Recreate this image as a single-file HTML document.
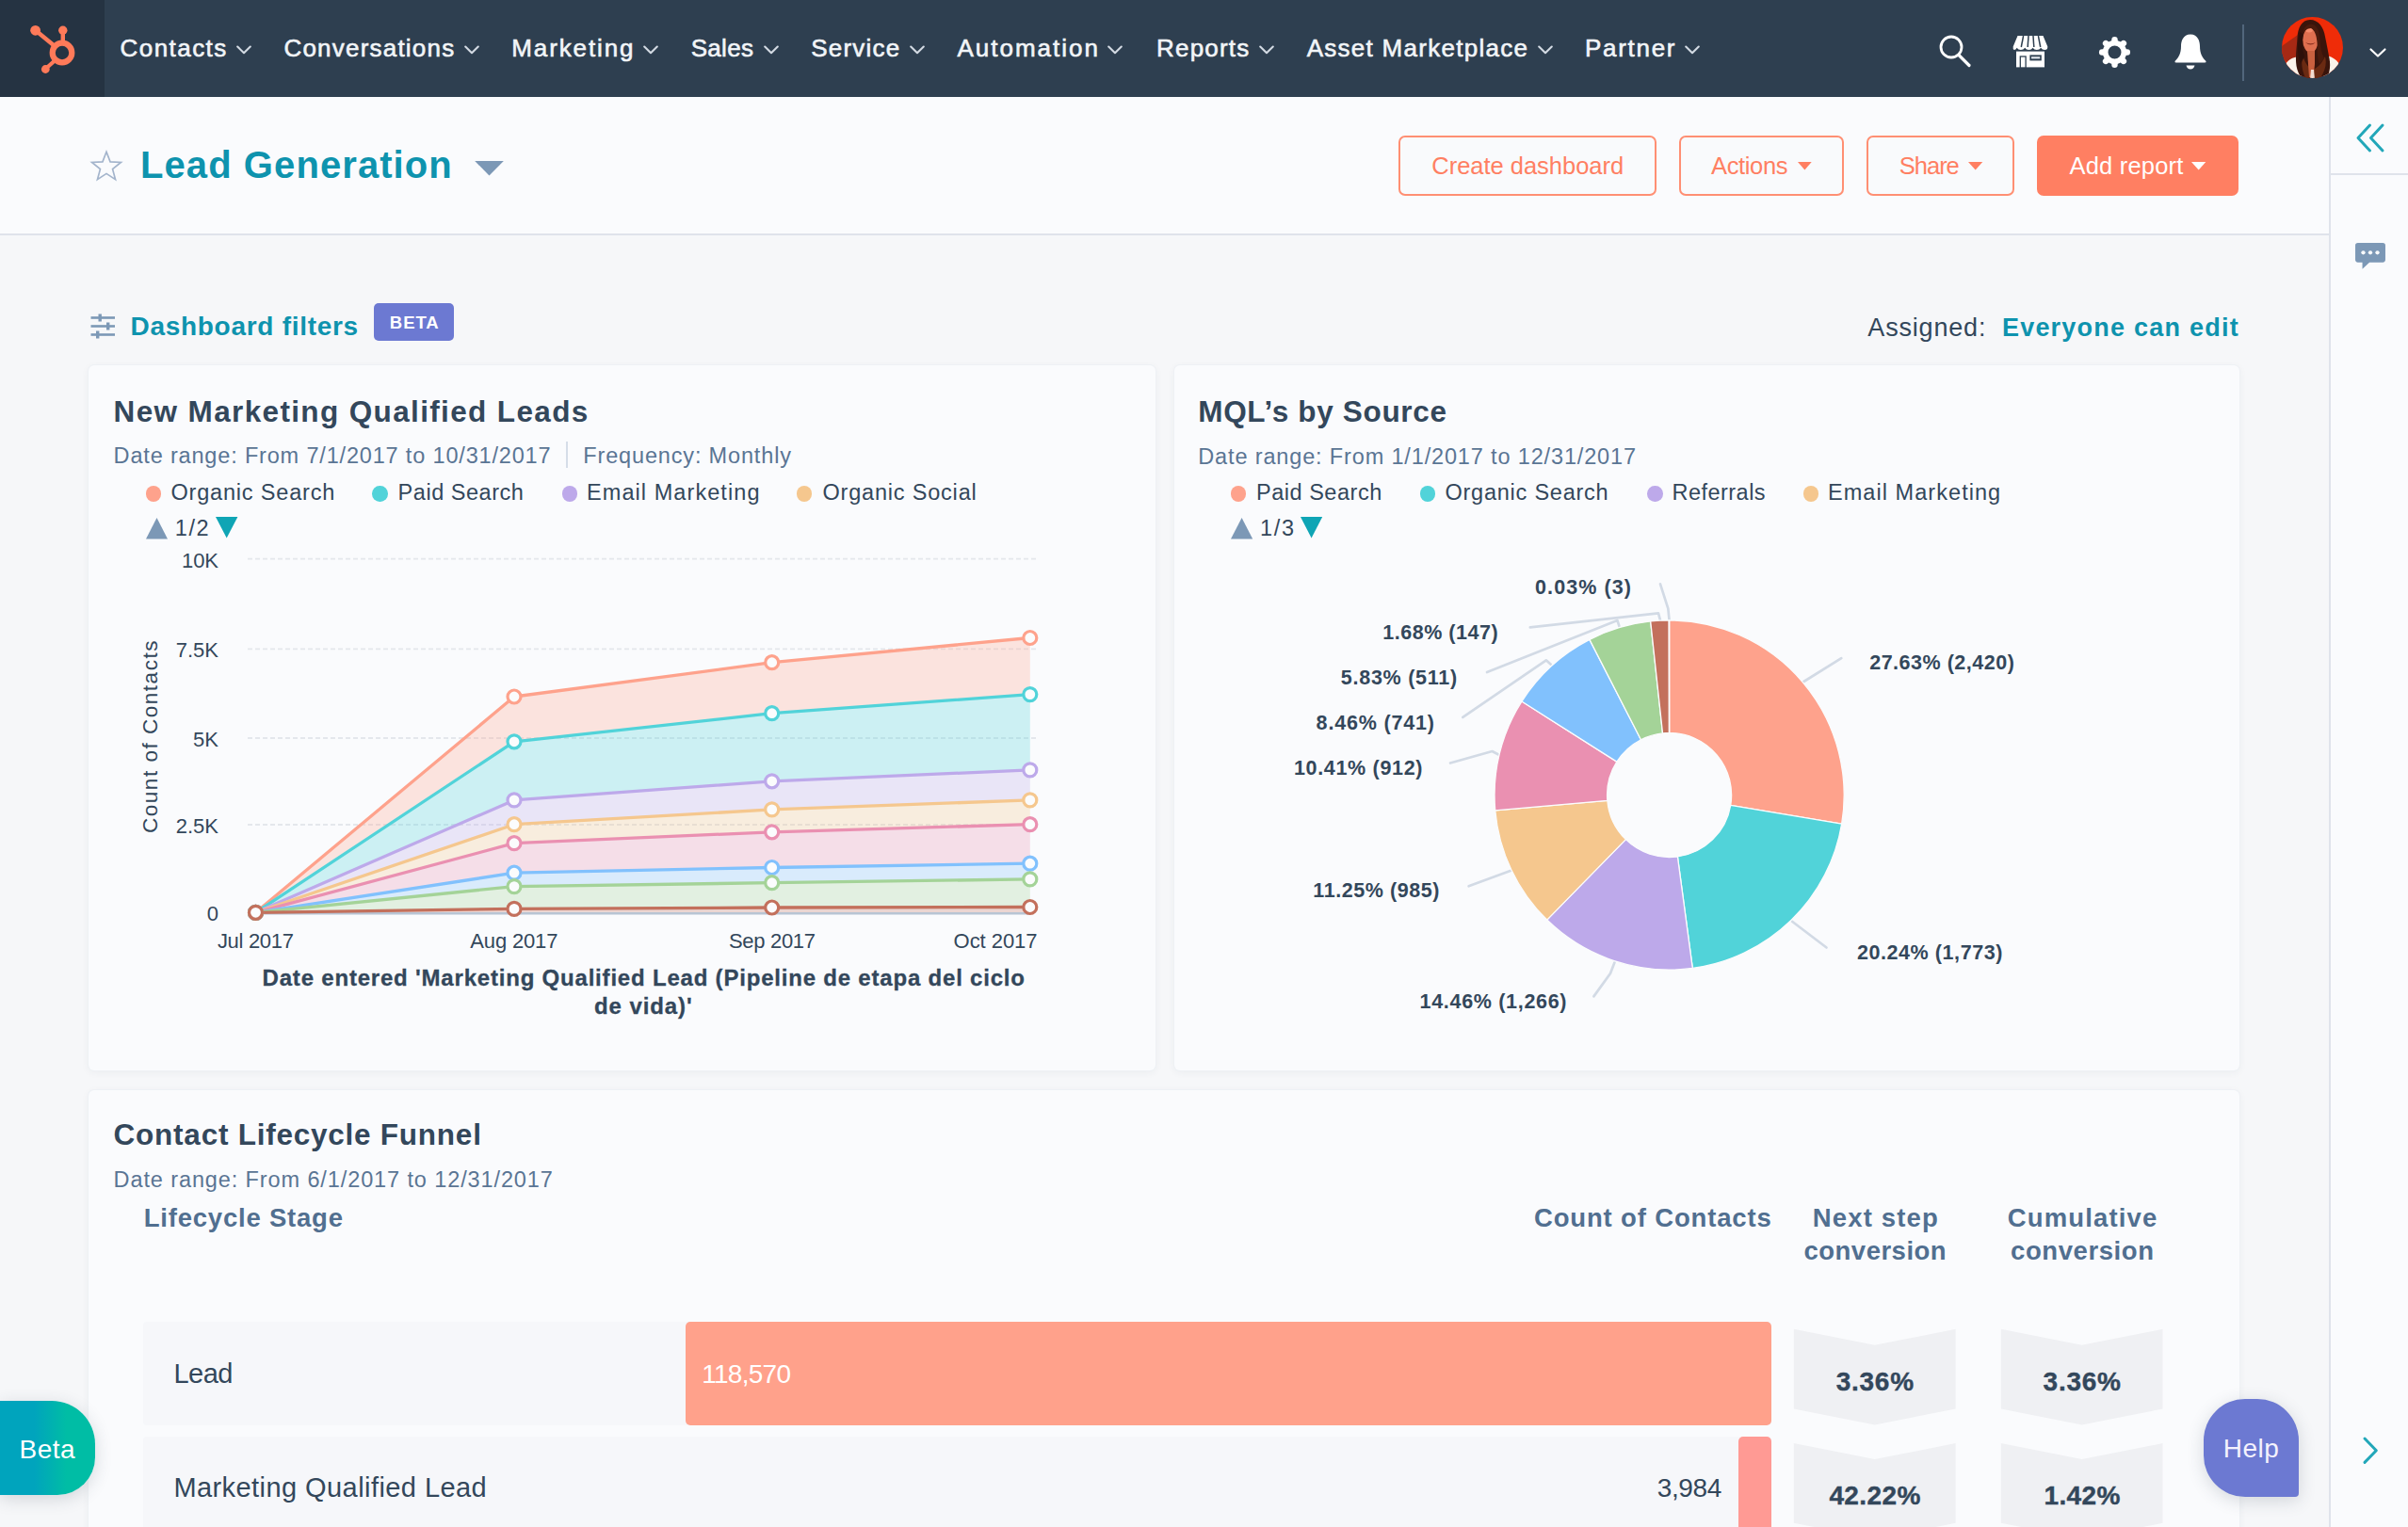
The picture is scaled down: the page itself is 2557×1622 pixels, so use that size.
<!DOCTYPE html><html lang="en"><head><meta charset="utf-8"><title>Lead Generation</title><style>
*{box-sizing:border-box;margin:0;padding:0}
html,body{width:2557px;height:1622px;overflow:hidden;background:#f6f7f9;font-family:"Liberation Sans",sans-serif;}
.t{position:absolute;white-space:nowrap;line-height:1;}
.abs{position:absolute}
#nav{position:absolute;left:0;top:0;width:2557px;height:103.5px;background:#2e3f50;}
#logo{position:absolute;left:0;top:0;width:111px;height:103.5px;background:#253342;}
#header{position:absolute;left:0;top:103px;width:2474px;height:147px;background:#fafbfd;border-bottom:2px solid #dfe3eb;}
#side{position:absolute;left:2473px;top:103px;width:84px;height:1519px;background:#fafbfd;border-left:2px solid #dfe3eb;}
.btn{position:absolute;top:144px;height:64px;border:2px solid #ff8f73;border-radius:7px;background:#f9fafc;}
.card{position:absolute;background:#fafbfd;border-radius:6px;box-shadow:0 0 0 1px #eef1f5,0 2px 8px rgba(45,62,80,.06);}
svg{position:absolute;overflow:visible}
</style></head><body>
<div id="nav"><div id="logo"></div>
<svg style="left:28px;top:22px" width="56" height="60" viewBox="0 0 56 60">
<g fill="none" stroke="#ff7a59" stroke-linecap="round">
<circle cx="38" cy="34" r="10.300" stroke-width="6.2"/>
<line x1="10" y1="10.500" x2="29.500" y2="26.500" stroke-width="4.4"/>
<line x1="38.8" y1="11" x2="38.8" y2="23" stroke-width="4.4"/>
<line x1="20.5" y1="51" x2="30" y2="42.500" stroke-width="4.2"/>
</g>
<g fill="#ff7a59"><circle cx="9.600" cy="10.300" r="5.400"/><circle cx="38.8" cy="10.300" r="4.700"/><circle cx="20.300" cy="51.500" r="4.400"/></g>
</svg>
<div class="t" style="left:127.6px;top:38px;font-size:26.0px;color:#f2f5f8;letter-spacing:1.44px;-webkit-text-stroke:0.60px #f2f5f8;">Contacts</div>
<svg style="left:249.8px;top:47px" width="18" height="12" viewBox="0 0 18 12"><path d="M2.2 2.6 L9 9.2 L15.8 2.6" fill="none" stroke="#d3dae3" stroke-width="2.1" stroke-linecap="round" stroke-linejoin="round"/></svg>
<div class="t" style="left:301.4px;top:38px;font-size:26.0px;color:#f2f5f8;letter-spacing:1.22px;-webkit-text-stroke:0.60px #f2f5f8;">Conversations</div>
<svg style="left:491.7px;top:47px" width="18" height="12" viewBox="0 0 18 12"><path d="M2.2 2.6 L9 9.2 L15.8 2.6" fill="none" stroke="#d3dae3" stroke-width="2.1" stroke-linecap="round" stroke-linejoin="round"/></svg>
<div class="t" style="left:543.3px;top:38px;font-size:26.0px;color:#f2f5f8;letter-spacing:1.88px;-webkit-text-stroke:0.60px #f2f5f8;">Marketing</div>
<svg style="left:682.0px;top:47px" width="18" height="12" viewBox="0 0 18 12"><path d="M2.2 2.6 L9 9.2 L15.8 2.6" fill="none" stroke="#d3dae3" stroke-width="2.1" stroke-linecap="round" stroke-linejoin="round"/></svg>
<div class="t" style="left:733.7px;top:38px;font-size:26.0px;color:#f2f5f8;letter-spacing:0.31px;-webkit-text-stroke:0.60px #f2f5f8;">Sales</div>
<svg style="left:809.5px;top:47px" width="18" height="12" viewBox="0 0 18 12"><path d="M2.2 2.6 L9 9.2 L15.8 2.6" fill="none" stroke="#d3dae3" stroke-width="2.1" stroke-linecap="round" stroke-linejoin="round"/></svg>
<div class="t" style="left:861.2px;top:38px;font-size:26.0px;color:#f2f5f8;letter-spacing:1.23px;-webkit-text-stroke:0.60px #f2f5f8;">Service</div>
<svg style="left:964.8px;top:47px" width="18" height="12" viewBox="0 0 18 12"><path d="M2.2 2.6 L9 9.2 L15.8 2.6" fill="none" stroke="#d3dae3" stroke-width="2.1" stroke-linecap="round" stroke-linejoin="round"/></svg>
<div class="t" style="left:1016.5px;top:38px;font-size:26.0px;color:#f2f5f8;letter-spacing:1.99px;-webkit-text-stroke:0.60px #f2f5f8;">Automation</div>
<svg style="left:1175.4px;top:47px" width="18" height="12" viewBox="0 0 18 12"><path d="M2.2 2.6 L9 9.2 L15.8 2.6" fill="none" stroke="#d3dae3" stroke-width="2.1" stroke-linecap="round" stroke-linejoin="round"/></svg>
<div class="t" style="left:1228.0px;top:38px;font-size:26.0px;color:#f2f5f8;letter-spacing:1.21px;-webkit-text-stroke:0.60px #f2f5f8;">Reports</div>
<svg style="left:1335.8px;top:47px" width="18" height="12" viewBox="0 0 18 12"><path d="M2.2 2.6 L9 9.2 L15.8 2.6" fill="none" stroke="#d3dae3" stroke-width="2.1" stroke-linecap="round" stroke-linejoin="round"/></svg>
<div class="t" style="left:1387.7px;top:38px;font-size:26.0px;color:#f2f5f8;letter-spacing:1.28px;-webkit-text-stroke:0.60px #f2f5f8;">Asset Marketplace</div>
<svg style="left:1631.5px;top:47px" width="18" height="12" viewBox="0 0 18 12"><path d="M2.2 2.6 L9 9.2 L15.8 2.6" fill="none" stroke="#d3dae3" stroke-width="2.1" stroke-linecap="round" stroke-linejoin="round"/></svg>
<div class="t" style="left:1683.0px;top:38px;font-size:26.0px;color:#f2f5f8;letter-spacing:1.71px;-webkit-text-stroke:0.60px #f2f5f8;">Partner</div>
<svg style="left:1788.0px;top:47px" width="18" height="12" viewBox="0 0 18 12"><path d="M2.2 2.6 L9 9.2 L15.8 2.6" fill="none" stroke="#d3dae3" stroke-width="2.1" stroke-linecap="round" stroke-linejoin="round"/></svg>
<svg style="left:2058px;top:36px" width="36" height="36" viewBox="0 0 36 36"><circle cx="14" cy="14" r="11" fill="none" stroke="#fff" stroke-width="2.8"/><line x1="22" y1="22.5" x2="33" y2="33.5" stroke="#fff" stroke-width="3.2" stroke-linecap="round"/></svg>
<svg style="left:2136px;top:36px" width="40" height="38" viewBox="0 0 40 38"><g fill="#fff">
<path d="M6.5 2 H33.5 L38.3 13.5 Q38.5 17 35.2 17 Q32.500 17 31.2 14.8 Q29.800 17 26.7 17 Q24 17 22.6 14.8 Q21.200 17 18.5 17 Q15.500 17 14.2 14.8 Q12.800 17 9.8 17 Q7 17 5.7 14.8 Q4.500 17 2.8 17 Q1.200 16.500 1.7 13.5 Z"/>
<rect x="5" y="18.6" width="30" height="16.8"/></g>
<g stroke="#2e3f50" stroke-width="1.5" fill="none"><line x1="12.6" y1="2" x2="10.3" y2="14"/><line x1="18" y1="2" x2="17.200" y2="14"/><line x1="23" y1="2" x2="23.800" y2="14"/><line x1="28.4" y1="2" x2="30.700" y2="14"/>
<rect x="9.3" y="24" width="5.8" height="12.5" stroke-width="1.300"/></g>
<rect x="19.4" y="22.4" width="12.4" height="6" fill="#2e3f50"/><rect x="21" y="24.200" width="9.200" height="2.200" fill="#dfe5ec"/></svg>
<svg style="left:2228px;top:37.5px" width="35" height="35" viewBox="0 0 36 36"><g stroke="#fff" fill="none"><circle cx="18" cy="18" r="10.1" stroke-width="5.8"/><line x1="18.00" y1="6.50" x2="18.00" y2="4.30" stroke-width="6.6" stroke-linecap="round"/><line x1="26.13" y1="9.87" x2="27.69" y2="8.31" stroke-width="6.6" stroke-linecap="round"/><line x1="29.50" y1="18.00" x2="31.70" y2="18.00" stroke-width="6.6" stroke-linecap="round"/><line x1="26.13" y1="26.13" x2="27.69" y2="27.69" stroke-width="6.6" stroke-linecap="round"/><line x1="18.00" y1="29.50" x2="18.00" y2="31.70" stroke-width="6.6" stroke-linecap="round"/><line x1="9.87" y1="26.13" x2="8.31" y2="27.69" stroke-width="6.6" stroke-linecap="round"/><line x1="6.50" y1="18.00" x2="4.30" y2="18.00" stroke-width="6.6" stroke-linecap="round"/><line x1="9.87" y1="9.87" x2="8.31" y2="8.31" stroke-width="6.6" stroke-linecap="round"/></g></svg>
<svg style="left:2308px;top:35px" width="36" height="40" viewBox="0 0 36 40"><path fill="#fff" d="M18 1.5 C10 1.500 8 9 8 14 C8 22 5.500 26 1.5 30 Q1 31.500 3 31.5 H33 Q35 31.500 34.5 30 C30.500 26 28 22 28 14 C28 9 26 1.500 18 1.5 Z M13.5 34.5 H22.5 Q21.500 38.500 18 38.5 Q14.500 38.500 13.5 34.5 Z"/></svg>
<div class="abs" style="left:2381px;top:26px;width:2px;height:60px;background:#52667c"></div>
<div class="abs" style="left:2422.5px;top:17.5px;width:65px;height:65px;border-radius:50%;overflow:hidden"><svg style="left:0;top:0" width="65" height="65" viewBox="0 0 65 65">
<g><rect width="65" height="65" fill="#ef2c08"/>
<path d="M0 31 L17 19 L17 43 L6 48 L0 44 Z" fill="#a62914"/>
<path d="M4 50 C8 44 14 42 18 43 L22 66 L4 66 Z" fill="#fbf3ea"/>
<path d="M45 41 C52 41 58 45 61 50 L58 66 L44 66 Z" fill="#fbf3ea"/>
<path d="M30 3 C21 3 17 12 16.5 22 C16 32 14 42 15.5 52 C16.500 58 19 63 22 66 L47 66 C51 60 52 52 50.5 44 C49 36 47.500 28 46 21 C44.500 11 39 3 30 3 Z" fill="#3a140b"/>
<path d="M22 40 C20 50 22 60 26 66 L40 66 C46 58 48 50 46 42 C42 50 38 54 33 56 C28 54 24 48 22 40 Z" fill="#6a2a12"/>
<ellipse cx="30.5" cy="24.5" rx="8.2" ry="13.500" fill="#df6f4f"/>
<ellipse cx="29" cy="13.500" rx="4" ry="3" fill="#f58a6a"/>
<path d="M27 36 L35 36 L35 50 L33.500 64 L29 64 L28 50 Z" fill="#c9603f"/>
<path d="M25 27 Q30.500 32 36 27 Q30.500 29.500 25 27 Z" fill="#8a3020"/>
<path d="M22.5 18 C23 10 28 6.500 33 8 C38 9.500 40 16 40.5 24 C41 32 42 38 45 44 L40 50 C37 42 38 34 37.500 27 C37 20 35 14 31 12 C27 12 24 15 22.500 18 Z" fill="#4a1a0c"/>
<path d="M22.5 18 C21 26 21.500 34 24 42 L20 50 C16 40 16.500 26 19 16 Z" fill="#2e100a"/>
<path d="M31 56 L34 56 L35 66 L30 66 Z" fill="#f3dcd0"/>
</g></svg></div>
<svg style="left:2515px;top:50px" width="20" height="12" viewBox="0 0 20 12"><path d="M2.5 2.5 L10 9.5 L17.5 2.5" fill="none" stroke="#fff" stroke-width="2.2" stroke-linecap="round" stroke-linejoin="round"/></svg>
</div>
<div id="header"></div>
<svg style="left:94px;top:157px" width="38" height="38" viewBox="0 0 38 38"><polygon points="19.00,4.30 23.06,14.92 34.41,15.49 25.56,22.63 28.52,33.61 19.00,27.40 9.48,33.61 12.44,22.63 3.59,15.49 14.94,14.92" fill="none" stroke="#a3b4cc" stroke-width="1.7" stroke-linejoin="miter"/></svg>
<div class="t" style="left:149.0px;top:155px;font-size:40.0px;color:#0e93ae;font-weight:700;letter-spacing:1.08px;">Lead Generation</div>
<svg style="left:503px;top:170px" width="33" height="18" viewBox="0 0 33 18"><path d="M1.2 1 H31.8 L16.5 16.6 Z" fill="#7c98b6"/></svg>
<div class="btn" style="left:1485.4px;width:273.6px;"></div>
<div class="t" style="left:1520.3px;top:164px;font-size:25.5px;color:#ff7f62;letter-spacing:-0.02px;">Create dashboard</div>
<div class="btn" style="left:1782.9px;width:175.4px;"></div>
<div class="t" style="left:1817.0px;top:164px;font-size:25.5px;color:#ff7f62;letter-spacing:-0.35px;">Actions</div>
<svg style="left:1908.5px;top:171.6px" width="14.7" height="8.6" viewBox="0 0 14.7 8.6"><path d="M0 0 H14.7 L7.4 8.6 Z" fill="#ff7f62"/></svg>
<div class="btn" style="left:1981.9px;width:157.0px;"></div>
<div class="t" style="left:2016.8px;top:164px;font-size:25.5px;color:#ff7f62;letter-spacing:-1.01px;">Share</div>
<svg style="left:2089.5px;top:171.6px" width="15.3" height="8.6" viewBox="0 0 15.3 8.6"><path d="M0 0 H15.3 L7.7 8.6 Z" fill="#ff7f62"/></svg>
<div class="btn" style="left:2162.8px;width:214.3px;background:#ff7f62;border-color:#ff7f62;"></div>
<div class="t" style="left:2197.5px;top:164px;font-size:25.5px;color:#ffffff;letter-spacing:0.19px;">Add report</div>
<svg style="left:2327.2px;top:171.6px" width="15.3" height="8.6" viewBox="0 0 15.3 8.6"><path d="M0 0 H15.3 L7.7 8.6 Z" fill="#fff"/></svg>
<div id="side"></div>
<div class="abs" style="left:2474px;top:184px;width:83px;height:2px;background:#dfe3eb"></div>
<svg style="left:2500px;top:130px" width="34" height="34" viewBox="0 0 34 34"><g fill="none" stroke="#22a7b9" stroke-width="3" stroke-linecap="round" stroke-linejoin="round"><path d="M16.5 3 L4 16.5 L16.500 30"/><path d="M30 3 L17.5 16.5 L30 30"/></g></svg>
<svg style="left:2501px;top:258px" width="32" height="28.2" viewBox="0 0 34 30"><path d="M3 0 H31 Q34 0 34 3 V19 Q34 22 31 22 H16 L8 29.5 V22 H3 Q0 22 0 19 V3 Q0 0 3 0 Z" fill="#7c98b6"/><g fill="#f9fafc"><circle cx="9" cy="11" r="2.3"/><circle cx="17" cy="11" r="2.3"/><circle cx="25" cy="11" r="2.3"/></g></svg>
<svg style="left:2506px;top:1523px" width="22" height="36" viewBox="0 0 22 36"><path d="M5 5 L17.3 17.7 L5 30.400" fill="none" stroke="#22a7b9" stroke-width="3" stroke-linecap="round" stroke-linejoin="round"/></svg>
<svg style="left:96px;top:333px" width="27" height="27" viewBox="0 0 27 27"><g stroke="#7c98b6" stroke-width="2.6" fill="none">
<line x1="0.5" y1="4.5" x2="26" y2="4.5"/><line x1="0.5" y1="13.5" x2="26" y2="13.5"/><line x1="0.5" y1="22.5" x2="26" y2="22.5"/></g>
<g fill="#7c98b6"><rect x="8.5" y="0.5" width="3.4" height="8"/><rect x="17" y="9.5" width="3.4" height="8"/><rect x="6" y="18.5" width="3.4" height="8"/></g></svg>
<div class="t" style="left:138.5px;top:333px;font-size:28.0px;color:#0e93ae;font-weight:700;letter-spacing:0.71px;">Dashboard filters</div>
<div class="abs" style="left:396.9px;top:321.9px;width:85.2px;height:39.9px;border-radius:5px;background:#6c79d2"></div>
<div class="t" style="left:413.8px;top:334px;font-size:18.5px;color:#fff;font-weight:700;letter-spacing:0.97px;">BETA</div>
<div class="t" style="left:1983.3px;top:335px;font-size:27.0px;color:#33475b;letter-spacing:0.82px;">Assigned:</div>
<div class="t" style="left:2125.9px;top:335px;font-size:27.0px;color:#0e93ae;font-weight:700;letter-spacing:1.23px;">Everyone can edit</div>
<div class="card" style="left:94px;top:388px;width:1133px;height:749px"></div>
<div class="card" style="left:1246.5px;top:388px;width:1131px;height:749px"></div>
<div class="card" style="left:94px;top:1158px;width:2283.5px;height:500px"></div>
<div class="t" style="left:120.6px;top:422px;font-size:31.5px;color:#33475b;font-weight:700;letter-spacing:1.36px;">New Marketing Qualified Leads</div>
<div class="t" style="left:120.6px;top:473px;font-size:23.5px;color:#5a7594;letter-spacing:0.83px;">Date range: From 7/1/2017 to 10/31/2017</div>
<div class="abs" style="left:601px;top:469px;width:2px;height:28px;background:#d5dde8"></div>
<div class="t" style="left:619.3px;top:473px;font-size:23.5px;color:#5a7594;letter-spacing:0.84px;">Frequency: Monthly</div>
<div class="abs" style="left:154.7px;top:516.2px;width:16.4px;height:16.4px;border-radius:50%;background:#fea28c"></div>
<div class="t" style="left:181.4px;top:512px;font-size:23.5px;color:#33475b;letter-spacing:0.82px;">Organic Search</div>
<div class="abs" style="left:395.3px;top:516.2px;width:16.4px;height:16.4px;border-radius:50%;background:#51d3d9"></div>
<div class="t" style="left:422.6px;top:512px;font-size:23.5px;color:#33475b;letter-spacing:0.53px;">Paid Search</div>
<div class="abs" style="left:596.6px;top:516.2px;width:16.4px;height:16.4px;border-radius:50%;background:#bda9ea"></div>
<div class="t" style="left:623.0px;top:512px;font-size:23.5px;color:#33475b;letter-spacing:1.07px;">Email Marketing</div>
<div class="abs" style="left:846.1px;top:516.2px;width:16.4px;height:16.4px;border-radius:50%;background:#f5c78e"></div>
<div class="t" style="left:873.5px;top:512px;font-size:23.5px;color:#33475b;letter-spacing:0.80px;">Organic Social</div>
<svg style="left:155.4px;top:550.4px" width="23.0" height="22.4" viewBox="0 0 23.0 22.4"><path d="M0 22.4 L11.5 0 L23.0 22.4 Z" fill="#7c98b6"/></svg>
<div class="t" style="left:185.8px;top:550px;font-size:23.5px;color:#33475b;letter-spacing:1.52px;">1/2</div>
<svg style="left:228.5px;top:549.2px" width="23.4" height="22.4" viewBox="0 0 23.4 22.4"><path d="M0 0 H23.4 L11.7 22.4 Z" fill="#0fa5b5"/></svg>
<svg style="left:0;top:0" width="2557" height="1622" viewBox="0 0 2557 1622"><line x1="263.0" y1="593.6" x2="1101.5" y2="593.6" stroke="#e4e7ec" stroke-width="1.8" stroke-dasharray="5 3"/><line x1="263.0" y1="689.4" x2="1101.5" y2="689.4" stroke="#e4e7ec" stroke-width="1.8" stroke-dasharray="5 3"/><line x1="263.0" y1="784.0" x2="1101.5" y2="784.0" stroke="#e4e7ec" stroke-width="1.8" stroke-dasharray="5 3"/><line x1="263.0" y1="876.0" x2="1101.5" y2="876.0" stroke="#e4e7ec" stroke-width="1.8" stroke-dasharray="5 3"/><polygon points="271.5,969.3 546.0,740.0 819.7,703.7 1093.8,677.5 1093.8,737.6 819.7,757.7 546.0,787.8 271.5,969.3" fill="#fea28c" fill-opacity="0.27"/><polygon points="271.5,969.3 546.0,787.8 819.7,757.7 1093.8,737.6 1093.8,817.9 819.7,829.8 546.0,849.9 271.5,969.3" fill="#51d3d9" fill-opacity="0.27"/><polygon points="271.5,969.3 546.0,849.9 819.7,829.8 1093.8,817.9 1093.8,849.9 819.7,859.9 546.0,875.7 271.5,969.3" fill="#bda9ea" fill-opacity="0.27"/><polygon points="271.5,969.3 546.0,875.7 819.7,859.9 1093.8,849.9 1093.8,875.7 819.7,883.8 546.0,895.7 271.5,969.3" fill="#f5c78e" fill-opacity="0.27"/><polygon points="271.5,969.3 546.0,895.7 819.7,883.8 1093.8,875.7 1093.8,917.2 819.7,921.5 546.0,927.2 271.5,969.3" fill="#ea90b1" fill-opacity="0.27"/><polygon points="271.5,969.3 546.0,927.2 819.7,921.5 1093.8,917.2 1093.8,933.9 819.7,937.7 546.0,941.6 271.5,969.3" fill="#81c1fd" fill-opacity="0.27"/><polygon points="271.5,969.3 546.0,941.6 819.7,937.7 1093.8,933.9 1093.8,963.5 819.7,964.0 546.0,965.4 271.5,969.3" fill="#a4d398" fill-opacity="0.27"/><polygon points="271.5,969.3 546.0,965.4 819.7,964.0 1093.8,963.5 1093.8,969.3 819.7,969.3 546.0,969.3 271.5,969.3" fill="#c3705c" fill-opacity="0.27"/><line x1="271.5" y1="970.3" x2="1093.8" y2="970.3" stroke="#b8c4d4" stroke-width="2.5"/><polyline points="271.5,969.3 546.0,740.0 819.7,703.7 1093.8,677.5" fill="none" stroke="#fea28c" stroke-width="3.3" stroke-linejoin="round"/><polyline points="271.5,969.3 546.0,787.8 819.7,757.7 1093.8,737.6" fill="none" stroke="#51d3d9" stroke-width="3.3" stroke-linejoin="round"/><polyline points="271.5,969.3 546.0,849.9 819.7,829.8 1093.8,817.9" fill="none" stroke="#bda9ea" stroke-width="3.3" stroke-linejoin="round"/><polyline points="271.5,969.3 546.0,875.7 819.7,859.9 1093.8,849.9" fill="none" stroke="#f5c78e" stroke-width="3.3" stroke-linejoin="round"/><polyline points="271.5,969.3 546.0,895.7 819.7,883.8 1093.8,875.7" fill="none" stroke="#ea90b1" stroke-width="3.3" stroke-linejoin="round"/><polyline points="271.5,969.3 546.0,927.2 819.7,921.5 1093.8,917.2" fill="none" stroke="#81c1fd" stroke-width="3.3" stroke-linejoin="round"/><polyline points="271.5,969.3 546.0,941.6 819.7,937.7 1093.8,933.9" fill="none" stroke="#a4d398" stroke-width="3.3" stroke-linejoin="round"/><polyline points="271.5,969.3 546.0,965.4 819.7,964.0 1093.8,963.5" fill="none" stroke="#c3705c" stroke-width="3.3" stroke-linejoin="round"/><circle cx="271.5" cy="969.3" r="7" fill="#fbfcfd" stroke="#fea28c" stroke-width="3.2"/><circle cx="546.0" cy="740.0" r="7" fill="#fbfcfd" stroke="#fea28c" stroke-width="3.2"/><circle cx="819.7" cy="703.7" r="7" fill="#fbfcfd" stroke="#fea28c" stroke-width="3.2"/><circle cx="1093.8" cy="677.5" r="7" fill="#fbfcfd" stroke="#fea28c" stroke-width="3.2"/><circle cx="271.5" cy="969.3" r="7" fill="#fbfcfd" stroke="#51d3d9" stroke-width="3.2"/><circle cx="546.0" cy="787.8" r="7" fill="#fbfcfd" stroke="#51d3d9" stroke-width="3.2"/><circle cx="819.7" cy="757.7" r="7" fill="#fbfcfd" stroke="#51d3d9" stroke-width="3.2"/><circle cx="1093.8" cy="737.6" r="7" fill="#fbfcfd" stroke="#51d3d9" stroke-width="3.2"/><circle cx="271.5" cy="969.3" r="7" fill="#fbfcfd" stroke="#bda9ea" stroke-width="3.2"/><circle cx="546.0" cy="849.9" r="7" fill="#fbfcfd" stroke="#bda9ea" stroke-width="3.2"/><circle cx="819.7" cy="829.8" r="7" fill="#fbfcfd" stroke="#bda9ea" stroke-width="3.2"/><circle cx="1093.8" cy="817.9" r="7" fill="#fbfcfd" stroke="#bda9ea" stroke-width="3.2"/><circle cx="271.5" cy="969.3" r="7" fill="#fbfcfd" stroke="#f5c78e" stroke-width="3.2"/><circle cx="546.0" cy="875.7" r="7" fill="#fbfcfd" stroke="#f5c78e" stroke-width="3.2"/><circle cx="819.7" cy="859.9" r="7" fill="#fbfcfd" stroke="#f5c78e" stroke-width="3.2"/><circle cx="1093.8" cy="849.9" r="7" fill="#fbfcfd" stroke="#f5c78e" stroke-width="3.2"/><circle cx="271.5" cy="969.3" r="7" fill="#fbfcfd" stroke="#ea90b1" stroke-width="3.2"/><circle cx="546.0" cy="895.7" r="7" fill="#fbfcfd" stroke="#ea90b1" stroke-width="3.2"/><circle cx="819.7" cy="883.8" r="7" fill="#fbfcfd" stroke="#ea90b1" stroke-width="3.2"/><circle cx="1093.8" cy="875.7" r="7" fill="#fbfcfd" stroke="#ea90b1" stroke-width="3.2"/><circle cx="271.5" cy="969.3" r="7" fill="#fbfcfd" stroke="#81c1fd" stroke-width="3.2"/><circle cx="546.0" cy="927.2" r="7" fill="#fbfcfd" stroke="#81c1fd" stroke-width="3.2"/><circle cx="819.7" cy="921.5" r="7" fill="#fbfcfd" stroke="#81c1fd" stroke-width="3.2"/><circle cx="1093.8" cy="917.2" r="7" fill="#fbfcfd" stroke="#81c1fd" stroke-width="3.2"/><circle cx="271.5" cy="969.3" r="7" fill="#fbfcfd" stroke="#a4d398" stroke-width="3.2"/><circle cx="546.0" cy="941.6" r="7" fill="#fbfcfd" stroke="#a4d398" stroke-width="3.2"/><circle cx="819.7" cy="937.7" r="7" fill="#fbfcfd" stroke="#a4d398" stroke-width="3.2"/><circle cx="1093.8" cy="933.9" r="7" fill="#fbfcfd" stroke="#a4d398" stroke-width="3.2"/><circle cx="271.5" cy="969.3" r="7" fill="#fbfcfd" stroke="#c3705c" stroke-width="3.2"/><circle cx="546.0" cy="965.4" r="7" fill="#fbfcfd" stroke="#c3705c" stroke-width="3.2"/><circle cx="819.7" cy="964.0" r="7" fill="#fbfcfd" stroke="#c3705c" stroke-width="3.2"/><circle cx="1093.8" cy="963.5" r="7" fill="#fbfcfd" stroke="#c3705c" stroke-width="3.2"/></svg>
<div class="t" style="left:192.9px;top:585px;font-size:22.0px;color:#33475b;">10K</div>
<div class="t" style="left:186.7px;top:680px;font-size:22.0px;color:#33475b;">7.5K</div>
<div class="t" style="left:205.1px;top:775px;font-size:22.0px;color:#33475b;">5K</div>
<div class="t" style="left:186.7px;top:867px;font-size:22.0px;color:#33475b;">2.5K</div>
<div class="t" style="left:219.8px;top:960px;font-size:22.0px;color:#33475b;">0</div>
<div class="t" style="left:160px;top:781.6px;font-size:22.5px;color:#33475b;letter-spacing:1.52px;transform:translate(-50%,-50%) rotate(-90deg);">Count of Contacts</div>
<div class="t" style="left:230.9px;top:989px;font-size:22.0px;color:#33475b;letter-spacing:-0.30px;">Jul 2017</div>
<div class="t" style="left:499.3px;top:989px;font-size:22.0px;color:#33475b;letter-spacing:-0.16px;">Aug 2017</div>
<div class="t" style="left:773.9px;top:989px;font-size:22.0px;color:#33475b;letter-spacing:-0.30px;">Sep 2017</div>
<div class="t" style="left:1012.6px;top:989px;font-size:22.0px;color:#33475b;letter-spacing:-0.05px;">Oct 2017</div>
<div class="t" style="left:278.6px;top:1027px;font-size:24.0px;color:#33475b;font-weight:700;letter-spacing:0.80px;-webkit-text-stroke:0.30px #33475b;">Date entered 'Marketing Qualified Lead (Pipeline de etapa del ciclo</div>
<div class="t" style="left:631.0px;top:1057px;font-size:24.0px;color:#33475b;font-weight:700;letter-spacing:0.91px;-webkit-text-stroke:0.30px #33475b;">de vida)'</div>
<div class="t" style="left:1272.3px;top:422px;font-size:31.5px;color:#33475b;font-weight:700;letter-spacing:0.66px;">MQL’s by Source</div>
<div class="t" style="left:1272.3px;top:474px;font-size:23.5px;color:#5a7594;letter-spacing:0.85px;">Date range: From 1/1/2017 to 12/31/2017</div>
<div class="abs" style="left:1306.7px;top:516.2px;width:16.4px;height:16.4px;border-radius:50%;background:#fea28c"></div>
<div class="t" style="left:1334.0px;top:512px;font-size:23.5px;color:#33475b;letter-spacing:0.52px;">Paid Search</div>
<div class="abs" style="left:1508.0px;top:516.2px;width:16.4px;height:16.4px;border-radius:50%;background:#51d3d9"></div>
<div class="t" style="left:1534.5px;top:512px;font-size:23.5px;color:#33475b;letter-spacing:0.76px;">Organic Search</div>
<div class="abs" style="left:1749.2px;top:516.2px;width:16.4px;height:16.4px;border-radius:50%;background:#bda9ea"></div>
<div class="t" style="left:1775.5px;top:512px;font-size:23.5px;color:#33475b;letter-spacing:0.47px;">Referrals</div>
<div class="abs" style="left:1914.8px;top:516.2px;width:16.4px;height:16.4px;border-radius:50%;background:#f5c78e"></div>
<div class="t" style="left:1941.0px;top:512px;font-size:23.5px;color:#33475b;letter-spacing:1.05px;">Email Marketing</div>
<svg style="left:1307.2px;top:550.0px" width="23.2" height="22.4" viewBox="0 0 23.2 22.4"><path d="M0 22.4 L11.6 0 L23.2 22.4 Z" fill="#7c98b6"/></svg>
<div class="t" style="left:1337.9px;top:550px;font-size:23.5px;color:#33475b;letter-spacing:1.72px;">1/3</div>
<svg style="left:1380.7px;top:549.0px" width="23.2" height="22.4" viewBox="0 0 23.2 22.4"><path d="M0 0 H23.2 L11.6 22.4 Z" fill="#0fa5b5"/></svg>
<svg style="left:0;top:0" width="2557" height="1622" viewBox="0 0 2557 1622"><polyline points="1914.6,724.5 1955.3,699.2" fill="none" stroke="#d2dae5" stroke-width="2.7" stroke-linejoin="round" stroke-linecap="round"/><polyline points="1903.0,978.7 1939.5,1006.5" fill="none" stroke="#d2dae5" stroke-width="2.7" stroke-linejoin="round" stroke-linecap="round"/><polyline points="1714.5,1022.3 1710.0,1034.0 1692.4,1058.4" fill="none" stroke="#d2dae5" stroke-width="2.7" stroke-linejoin="round" stroke-linecap="round"/><polyline points="1604.4,924.7 1559.6,941.3" fill="none" stroke="#d2dae5" stroke-width="2.7" stroke-linejoin="round" stroke-linecap="round"/><polyline points="1590.7,801.3 1584.5,798.0 1540.0,810.5" fill="none" stroke="#d2dae5" stroke-width="2.7" stroke-linejoin="round" stroke-linecap="round"/><polyline points="1646.8,705.8 1641.8,701.3 1553.3,761.9" fill="none" stroke="#d2dae5" stroke-width="2.7" stroke-linejoin="round" stroke-linecap="round"/><polyline points="1719.4,665.1 1717.4,658.9 1579.0,714.1" fill="none" stroke="#d2dae5" stroke-width="2.7" stroke-linejoin="round" stroke-linecap="round"/><polyline points="1763.0,658.9 1761.0,651.4 1624.8,666.4" fill="none" stroke="#d2dae5" stroke-width="2.7" stroke-linejoin="round" stroke-linecap="round"/><polyline points="1772.6,658.9 1771.3,646.4 1763.0,620.3" fill="none" stroke="#d2dae5" stroke-width="2.7" stroke-linejoin="round" stroke-linecap="round"/><path d="M1772.60 658.90 A185.6 185.6 0 0 1 1955.67 875.06 L1837.70 855.37 A66.0 66.0 0 0 0 1772.60 778.50 Z" fill="#fea28c" stroke="#fbfcfd" stroke-width="1.3" stroke-linejoin="round"/><path d="M1955.67 875.06 A185.6 185.6 0 0 1 1797.31 1028.45 L1781.39 909.91 A66.0 66.0 0 0 0 1837.70 855.37 Z" fill="#51d3d9" stroke="#fbfcfd" stroke-width="1.3" stroke-linejoin="round"/><path d="M1797.31 1028.45 A185.6 185.6 0 0 1 1642.72 977.08 L1726.41 891.65 A66.0 66.0 0 0 0 1781.39 909.91 Z" fill="#bda9ea" stroke="#fbfcfd" stroke-width="1.3" stroke-linejoin="round"/><path d="M1642.72 977.08 A185.6 185.6 0 0 1 1587.73 860.95 L1706.86 850.35 A66.0 66.0 0 0 0 1726.41 891.65 Z" fill="#f5c78e" stroke="#fbfcfd" stroke-width="1.3" stroke-linejoin="round"/><path d="M1587.73 860.95 A185.6 185.6 0 0 1 1615.88 745.07 L1716.87 809.14 A66.0 66.0 0 0 0 1706.86 850.35 Z" fill="#ea90b1" stroke="#fbfcfd" stroke-width="1.3" stroke-linejoin="round"/><path d="M1615.88 745.07 A185.6 185.6 0 0 1 1687.92 679.35 L1742.49 785.77 A66.0 66.0 0 0 0 1716.87 809.14 Z" fill="#81c1fd" stroke="#fbfcfd" stroke-width="1.3" stroke-linejoin="round"/><path d="M1687.92 679.35 A185.6 185.6 0 0 1 1752.70 659.97 L1765.52 778.88 A66.0 66.0 0 0 0 1742.49 785.77 Z" fill="#a4d398" stroke="#fbfcfd" stroke-width="1.3" stroke-linejoin="round"/><path d="M1752.70 659.97 A185.6 185.6 0 0 1 1772.25 658.90 L1772.48 778.50 A66.0 66.0 0 0 0 1765.52 778.88 Z" fill="#c3705c" stroke="#fbfcfd" stroke-width="1.3" stroke-linejoin="round"/><path d="M1772.25 658.90 A185.6 185.6 0 0 1 1772.60 658.90 L1772.60 778.50 A66.0 66.0 0 0 0 1772.48 778.50 Z" fill="#e6a5f0" stroke="#fbfcfd" stroke-width="1.3" stroke-linejoin="round"/></svg>
<div class="t" style="left:1630.1px;top:614px;font-size:21.5px;color:#33475b;font-weight:700;letter-spacing:1.07px;">0.03% (3)</div>
<div class="t" style="left:1468.2px;top:662px;font-size:21.5px;color:#33475b;font-weight:700;letter-spacing:0.54px;">1.68% (147)</div>
<div class="t" style="left:1423.8px;top:710px;font-size:21.5px;color:#33475b;font-weight:700;letter-spacing:0.74px;">5.83% (511)</div>
<div class="t" style="left:1397.6px;top:758px;font-size:21.5px;color:#33475b;font-weight:700;letter-spacing:0.83px;">8.46% (741)</div>
<div class="t" style="left:1373.9px;top:806px;font-size:21.5px;color:#33475b;font-weight:700;letter-spacing:0.68px;">10.41% (912)</div>
<div class="t" style="left:1394.3px;top:936px;font-size:21.5px;color:#33475b;font-weight:700;letter-spacing:0.56px;">11.25% (985)</div>
<div class="t" style="left:1507.6px;top:1054px;font-size:21.5px;color:#33475b;font-weight:700;letter-spacing:0.68px;">14.46% (1,266)</div>
<div class="t" style="left:1971.9px;top:1002px;font-size:21.5px;color:#33475b;font-weight:700;letter-spacing:0.58px;">20.24% (1,773)</div>
<div class="t" style="left:1985.2px;top:694px;font-size:21.5px;color:#33475b;font-weight:700;letter-spacing:0.51px;">27.63% (2,420)</div>
<div class="t" style="left:120.6px;top:1190px;font-size:31.5px;color:#33475b;font-weight:700;letter-spacing:0.76px;">Contact Lifecycle Funnel</div>
<div class="t" style="left:120.6px;top:1242px;font-size:23.5px;color:#5a7594;letter-spacing:0.89px;">Date range: From 6/1/2017 to 12/31/2017</div>
<div class="t" style="left:152.7px;top:1280px;font-size:27.5px;color:#516f90;font-weight:700;letter-spacing:0.79px;">Lifecycle Stage</div>
<div class="t" style="left:1629.0px;top:1280px;font-size:27.5px;color:#516f90;font-weight:700;letter-spacing:0.84px;">Count of Contacts</div>
<div class="t" style="left:1924.8px;top:1280px;font-size:27.5px;color:#516f90;font-weight:700;letter-spacing:1.14px;">Next step</div>
<div class="t" style="left:1915.5px;top:1315px;font-size:27.5px;color:#516f90;font-weight:700;letter-spacing:0.49px;">conversion</div>
<div class="t" style="left:2131.8px;top:1280px;font-size:27.5px;color:#516f90;font-weight:700;letter-spacing:1.13px;">Cumulative</div>
<div class="t" style="left:2135.0px;top:1315px;font-size:27.5px;color:#516f90;font-weight:700;letter-spacing:0.59px;">conversion</div>
<div class="abs" style="left:151.8px;top:1404.3px;width:1729.5px;height:109.6px;background:#f6f7fa;border-radius:4px"></div>
<div class="abs" style="left:727.6px;top:1404.3px;width:1153.7px;height:109.6px;background:#ffa18b;border-radius:5px"></div>
<div class="abs" style="left:151.8px;top:1525.5px;width:1729.5px;height:109.6px;background:#f6f7fa;border-radius:4px"></div>
<div class="abs" style="left:1846px;top:1525.5px;width:35.3px;height:109.6px;background:#ff9a94;border-radius:5px"></div>
<div class="t" style="left:184.4px;top:1445px;font-size:29.0px;color:#33475b;letter-spacing:-0.47px;">Lead</div>
<div class="t" style="left:745.2px;top:1446px;font-size:28.0px;color:#fff;letter-spacing:-0.72px;">118,570</div>
<div class="t" style="left:184.4px;top:1566px;font-size:29.0px;color:#33475b;letter-spacing:0.43px;">Marketing Qualified Lead</div>
<div class="t" style="left:1759.7px;top:1567px;font-size:28.0px;color:#33475b;letter-spacing:-0.34px;">3,984</div>
<svg style="left:0;top:0" width="2557" height="1622" viewBox="0 0 2557 1622"><polygon points="1904.8,1411.8 1990.7,1428.8 2076.6,1411.8 2076.6,1496.5 1990.7,1513.5 1904.8,1496.5" fill="#eff0f3"/><polygon points="1904.8,1533.1 1990.7,1550.1 2076.6,1533.1 2076.6,1617.8 1990.7,1634.8 1904.8,1617.8" fill="#eff0f3"/><polygon points="2124.8,1411.8 2210.7,1428.8 2296.5,1411.8 2296.5,1496.5 2210.7,1513.5 2124.8,1496.5" fill="#eff0f3"/><polygon points="2124.8,1533.1 2210.7,1550.1 2296.5,1533.1 2296.5,1617.8 2210.7,1634.8 2124.8,1617.8" fill="#eff0f3"/></svg>
<div class="t" style="left:1949.7px;top:1454px;font-size:28.0px;color:#33475b;font-weight:700;letter-spacing:0.75px;-webkit-text-stroke:0.40px #33475b;">3.36%</div>
<div class="t" style="left:2169.6px;top:1454px;font-size:28.0px;color:#33475b;font-weight:700;letter-spacing:0.75px;-webkit-text-stroke:0.40px #33475b;">3.36%</div>
<div class="t" style="left:1942.4px;top:1575px;font-size:28.0px;color:#33475b;font-weight:700;letter-spacing:0.41px;-webkit-text-stroke:0.40px #33475b;">42.22%</div>
<div class="t" style="left:2170.6px;top:1575px;font-size:28.0px;color:#33475b;font-weight:700;letter-spacing:0.33px;-webkit-text-stroke:0.40px #33475b;">1.42%</div>
<div class="abs" style="left:0;top:1487.8px;width:101.3px;height:99.8px;border-radius:0 46px 40px 0;background:linear-gradient(90deg,#00a4bd 0%,#00a4bd 36%,#00bda5 70%,#00bda5 100%);box-shadow:0 4px 18px rgba(45,62,80,.18)"></div>
<div class="t" style="left:20.6px;top:1526px;font-size:28.0px;color:#fff;letter-spacing:0.50px;">Beta</div>
<div class="abs" style="left:2340px;top:1485.9px;width:101.4px;height:104px;border-radius:44px 44px 4px 44px;background:#6c79d2;box-shadow:0 4px 18px rgba(45,62,80,.18)"></div>
<div class="t" style="left:2360.7px;top:1525px;font-size:28.0px;color:#f4f2fd;letter-spacing:0.50px;">Help</div>
</body></html>
